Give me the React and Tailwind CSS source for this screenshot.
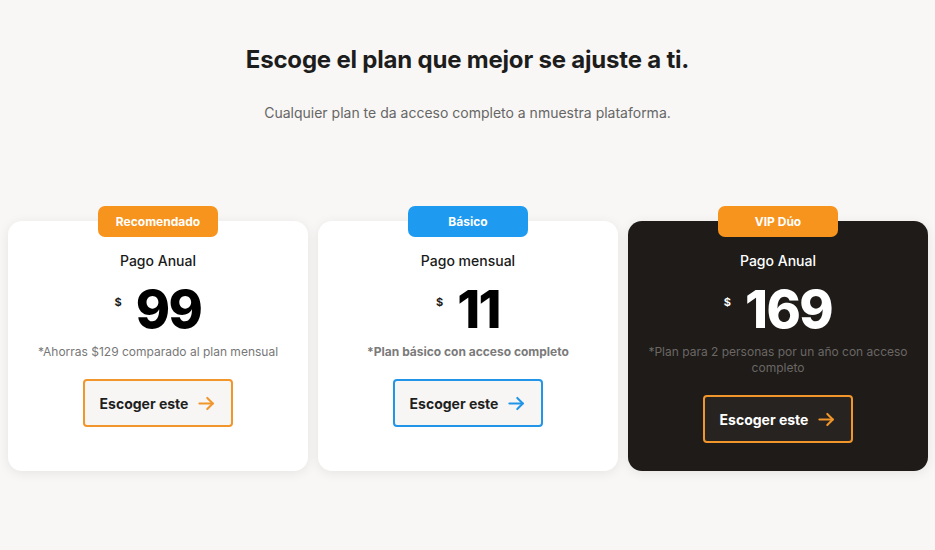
import React from "react";

function Arrow({ color }) {
  return (
    <svg width="19" height="19" viewBox="0 0 24 24" fill="none" stroke={color} strokeWidth="2.6" strokeLinecap="round" strokeLinejoin="round">
      <path d="M3 12h17" />
      <path d="M13 5l7 7-7 7" />
    </svg>
  );
}

function Card({ badge, badgeColor, title, price, note, noteBold, accent, dark }) {
  return (
    <div
      className={
        "relative flex-1 rounded-[14px] flex flex-col items-center pt-[29px] pb-[28px] shadow-[0_2px_12px_rgba(0,0,0,0.08)] " +
        (dark ? "bg-[#1e1b19]" : "bg-white")
      }
    >
      <div
        className={
          "absolute -top-[15px] left-1/2 -translate-x-1/2 w-[120px] h-[31px] rounded-[7px] flex items-center justify-center text-white text-[12px] font-bold " +
          badgeColor
        }
      >
        {badge}
      </div>
      <div className={"text-[14px] leading-[22px] font-medium " + (dark ? "text-white" : "text-[#1a1a1a]")}>{title}</div>
      <div className="flex items-start mt-[12px] h-[52px]">
        <span className={"text-[11px] font-bold mt-[10px] mr-[14px] " + (dark ? "text-white" : "text-[#1a1a1a]")}>$</span>
        <span className={"text-[52px] leading-[52px] font-extrabold tracking-[-1.5px] " + (dark ? "text-white" : "text-black")}>{price}</span>
      </div>
      <div
        className={
          "mt-[8px] text-[12px] leading-[16px] text-center px-[12px] " +
          (noteBold ? "font-bold text-[#7a7a7a]" : dark ? "text-[#6b6764]" : "text-[#777]")
        }
      >
        {note}
      </div>
      <button
        className={
          "mt-[19px] w-[150px] h-[48px] rounded-[4px] border-2 flex items-center justify-center gap-[9px] text-[14px] font-bold " +
          (dark ? "bg-[#262320] text-white " : "bg-[#f8f6f4] text-[#1f1f1f] ") +
          accent.border
        }
      >
        Escoger este
        <Arrow color={accent.arrow} />
      </button>
    </div>
  );
}

export default function App() {
  const orange = { border: "border-[#f0962a]", arrow: "#f0962a" };
  const blue = { border: "border-[#2196e8]", arrow: "#2196e8" };
  return (
    <div className="w-[935px] h-[550px] bg-[#f8f7f5] font-['Inter',sans-serif] flex flex-col items-center">
      <h1 className="mt-[44px] text-[24px] leading-[32px] font-bold text-[#1d1d1d] tracking-[-0.2px]">
        Escoge el plan que mejor se ajuste a ti.
      </h1>
      <p className="mt-[27px] text-[14px] leading-[20px] text-[#666]">
        Cualquier plan te da acceso completo a nmuestra plataforma.
      </p>
      <div className="mt-[98px] w-full px-[8px] pr-[7px] flex gap-[10px] items-stretch">
        <Card
          badge="Recomendado"
          badgeColor="bg-[#f7941d]"
          title="Pago Anual"
          price="99"
          note="*Ahorras $129 comparado al plan mensual"
          accent={orange}
        />
        <Card
          badge="Básico"
          badgeColor="bg-[#1e9bf0]"
          title="Pago mensual"
          price="11"
          note="*Plan básico con acceso completo"
          noteBold
          accent={blue}
        />
        <Card
          badge="VIP Dúo"
          badgeColor="bg-[#f7941d]"
          title="Pago Anual"
          price="169"
          note="*Plan para 2 personas por un año con acceso completo"
          accent={orange}
          dark
        />
      </div>
    </div>
  );
}
